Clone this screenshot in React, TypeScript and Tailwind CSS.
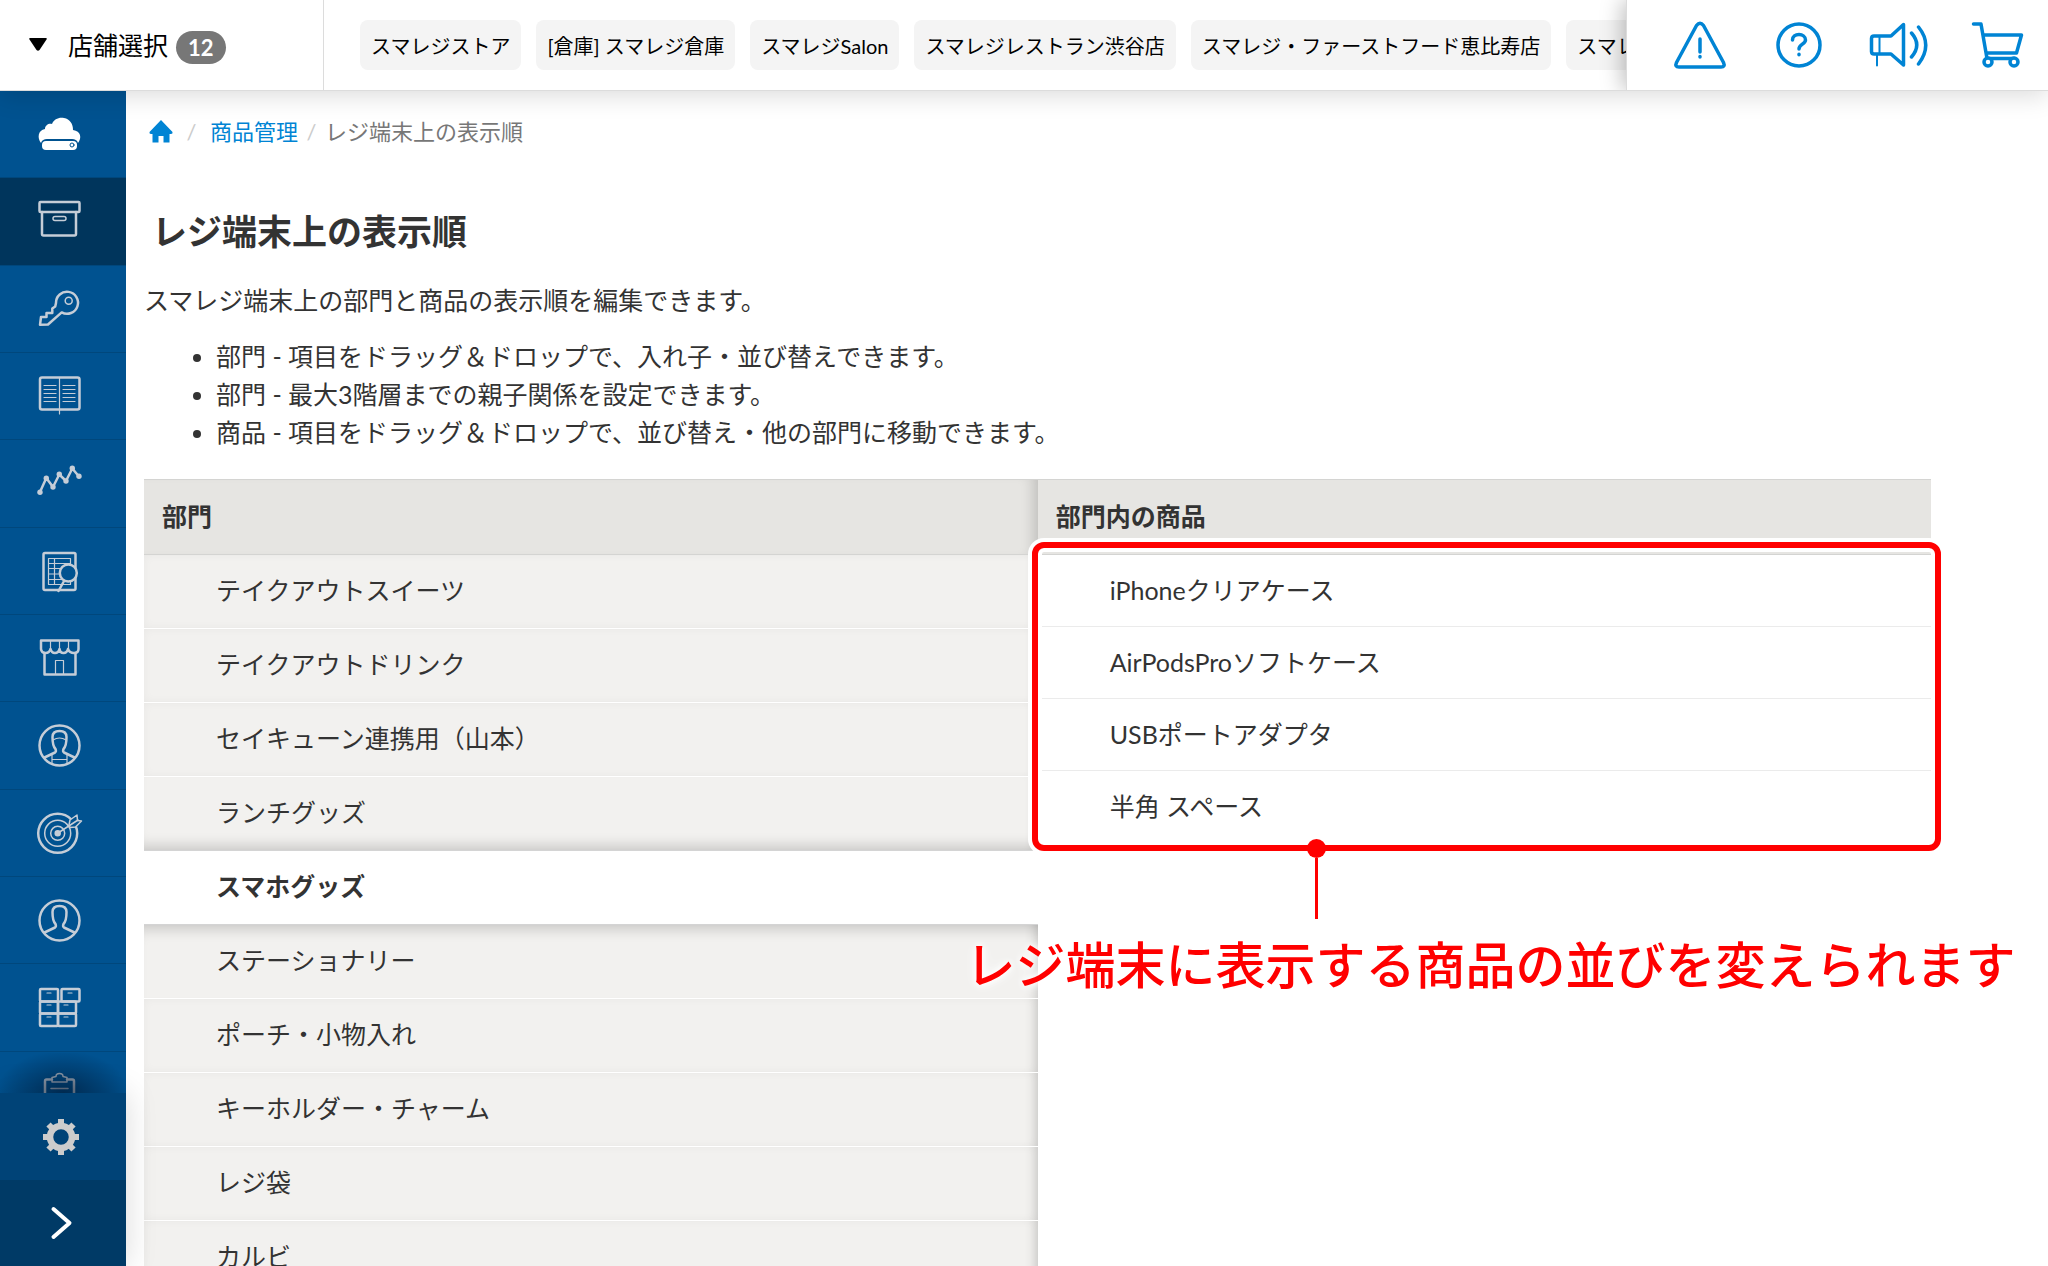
import type { ReactNode } from "react";

const stores = [
  "スマレジストア",
  "[倉庫] スマレジ倉庫",
  "スマレジSalon",
  "スマレジレストラン渋谷店",
  "スマレジ・ファーストフード恵比寿店",
  "スマレジ倉庫店",
];

const notes = [
  "部門 - 項目をドラッグ＆ドロップで、入れ子・並び替えできます。",
  "部門 - 最大3階層までの親子関係を設定できます。",
  "商品 - 項目をドラッグ＆ドロップで、並び替え・他の部門に移動できます。",
];

const categories = [
  "テイクアウトスイーツ",
  "テイクアウトドリンク",
  "セイキューン連携用（山本）",
  "ランチグッズ",
  "スマホグッズ",
  "ステーショナリー",
  "ポーチ・小物入れ",
  "キーホルダー・チャーム",
  "レジ袋",
  "カルビ",
];

const selectedCategory = 4;

const products = ["iPhoneクリアケース", "AirPodsProソフトケース", "USBポートアダプタ", "半角 スペース"];

const menu: { label: string; icon: ReactNode }[] = [
  {
    label: "ホーム",
    icon: (
      <g fill="#fff" stroke="none">
        <path d="M6 33C2 28 3 20 10 19c0-4 4-6 7-5 2-5 7-7 12-6 6 1 9 6 9 12 8 1 9 8 5 13-1-3-3-4-6-4H12c-3 0-5 1-6 4Z" />
        <rect x="7" y="31" width="35" height="9" rx="4" />
        <circle cx="37" cy="35" r="2" stroke="#005290" strokeWidth="1" />
      </g>
    ),
  },
  {
    label: "商品管理",
    icon: (
      <>
        <rect x="4.500" y="5" width="40" height="10" rx="1" />
        <path d="M7 15v22q0 1.500 1.500 1.500h31q1.500 0 1.500-1.500V15" />
        <rect x="18" y="19.500" width="13" height="4" rx="2" strokeWidth="1.500" />
      </>
    ),
  },
  {
    label: "権限",
    icon: (
      <>
        <path d="M21 18a11 11 0 1 1 5.700 9.400L13 39.500l-8 .3L6 32h5.500v-4h5.800v-4.500l2.900-2Z" />
        <circle cx="33.700" cy="15.700" r="3.500" strokeWidth="1.500" />
      </>
    ),
  },
  {
    label: "帳簿",
    icon: (
      <>
        <rect x="5" y="5.500" width="39.500" height="32" rx="2" />
        <path d="M24.500 6v36M9 13.500h12M9 17.500h12M9 21.500h12M9 25.500h12M9 29.500h12M28 13.500h12M28 17.500h12M28 21.500h12M28 25.500h12M28 29.500h12" strokeWidth="1.200" />
      </>
    ),
  },
  {
    label: "売上分析",
    icon: (
      <>
        <path d="m5 33 6.300-14L18 28l6.300-12.500L31 22l6.300-12.500L44 17.500" />
        <g fill="#c5cdd7" stroke="none">
          <circle cx="5" cy="33.300" r="2.700" />
          <circle cx="11.300" cy="19.300" r="2.700" />
          <circle cx="18" cy="28" r="2.700" />
          <circle cx="24.300" cy="15.300" r="2.700" />
          <circle cx="31" cy="22" r="2.700" />
          <circle cx="37.300" cy="9.300" r="2.700" />
          <circle cx="44" cy="17.300" r="2.700" />
        </g>
      </>
    ),
  },
  {
    label: "レポート",
    icon: (
      <>
        <rect x="8.500" y="6" width="32" height="37" rx="1.500" />
        <path d="M13.500 11.500h22v26h-22ZM19.500 11.500v26M13.500 16.500h22M13.500 21.500h22M13.500 27h22M13.500 32.500h22" strokeWidth="1.200" />
        <circle cx="33.300" cy="26" r="8.500" fill="#005290" />
        <path d="m28.500 35-5 9" />
      </>
    ),
  },
  {
    label: "店舗",
    icon: (
      <>
        <path d="M6 6.500h37.500V15q0 4-4.500 4t-6-4q-1 4-4.500 4t-4-4q-1 4-4.500 4t-4.500-4q-1 4-5 4T6 15Z" />
        <path d="M9.500 19v21.500h31V19" />
        <path d="M15.500 7v8M24.500 7v8M33.500 7v8M20.500 40V26.500h8V40" strokeWidth="1.200" />
      </>
    ),
  },
  {
    label: "スタッフ",
    icon: (
      <>
        <circle cx="24.500" cy="24.500" r="20" />
        <path d="M9.500 36.500 20 31.500q1.500-1 .5-3.500c-3-3-3-7-3-12 0-3.500 2-6 7-6s7 2.500 7 6c0 5 0 9-3 12q-1 2.500.5 3.500l10.500 5" />
        <path d="M18 19q6.500-4 13 0M17 33v9M32 33v9M17 38.500h15" strokeWidth="1.200" />
      </>
    ),
  },
  {
    label: "ターゲット",
    icon: (
      <>
        <circle cx="22.700" cy="24.300" r="19.500" />
        <circle cx="22.700" cy="24.300" r="13" strokeWidth="1.500" />
        <circle cx="22.700" cy="24.300" r="7" strokeWidth="1.500" />
        <circle cx="22.700" cy="24.300" r="2" fill="#c5cdd7" />
        <path d="m34 16 1-5 7-5 .5 5.500 4 .5-6 6-5.500.5Z" fill="#005290" strokeWidth="1.500" />
        <path d="m23 24 20-13" strokeWidth="1.500" />
      </>
    ),
  },
  {
    label: "会員",
    icon: (
      <>
        <circle cx="24.500" cy="24.500" r="20" />
        <path d="M9.500 36.500 20 31.500q1.500-1 .5-3.500c-3-3-3-7-3-12 0-3.500 2-6 7-6s7 2.500 7 6c0 5 0 9-3 12q-1 2.500.5 3.500l10.500 5" />
      </>
    ),
  },
  {
    label: "在庫",
    icon: (
      <>
        <rect x="5" y="6" width="18" height="12.500" rx="1" />
        <rect x="26.500" y="6" width="18" height="12.500" rx="1" />
        <rect x="5" y="18.500" width="18" height="12" rx="1" />
        <rect x="23" y="18.500" width="18" height="12" rx="1" />
        <rect x="5" y="30.500" width="18" height="12.500" rx="1" />
        <rect x="23" y="30.500" width="18" height="12.500" rx="1" />
        <path d="M12 10h4M33 10h4M12 22h4M29 22h4M12 34h4M29 34h4" strokeWidth="1.200" />
      </>
    ),
  },
  {
    label: "棚卸",
    icon: (
      <>
        <path d="M17 8.500h-5.500q-1.500 0-1.500 2V46h29V10.500q0-2-1.500-2H32" />
        <path d="M17 11V6.500l4-1q0-3 3.500-3t3.500 3l4 1V11ZM16 17.500h17" strokeWidth="1.500" />
      </>
    ),
  },
];

const tools: { label: string; icon: ReactNode }[] = [
  {
    label: "お知らせ",
    icon: (
      <>
        <path d="M26.500 10.500q3.500-4.500 7 0l20 37q2 4.500-2.500 4.500H9q-4.500 0-2.500-4.500Z" />
        <path d="M30 24v13M30 41.500v.5" />
      </>
    ),
  },
  {
    label: "ヘルプ",
    icon: (
      <>
        <circle cx="30" cy="30" r="21" />
        <path d="M23.500 25c0-3.500 3-5.500 6.500-5.500s6.500 2.200 6.500 5.500c0 4-6.500 4.500-6.500 9M30 39.300v.4" />
      </>
    ),
  },
  {
    label: "新着情報",
    icon: (
      <>
        <path d="M23 21H6q-2.500 0-2.500 2.500v13Q3.500 39 6 39h17l12.500 11V9.500Z" />
        <path d="M11.500 21v18M9 39v11.500" strokeWidth="2" />
        <path d="M43.500 18q10.500 12 0 24M50.500 12q14.500 18 0 37" />
      </>
    ),
  },
  {
    label: "カート",
    icon: (
      <>
        <path d="M6.500 9h7.500L20 43.500h28M16 20h38.500l-5 18H19" />
        <circle cx="21" cy="47" r="4" fill="#fff" />
        <circle cx="47" cy="47" r="4" fill="#fff" />
      </>
    ),
  },
];

function Header() {
  return (
    <header className="relative z-20 flex h-[91px] shrink-0 border-b border-[#dcdcdc] bg-white text-black shadow-[0_4px_24px_rgba(0,0,0,0.15)]">
      <button className="flex w-[324px] shrink-0 items-center border-r border-[#dcdcdc] pl-7 text-[25px] leading-8">
        <svg className="mr-5 h-4 w-5" viewBox="0 0 20 16" aria-hidden="true">
          <path d="M2 1h16q1.500 0 .5 1.500l-7 10.500q-1.500 1.500-3 0L1.500 2.500Q.5 1 2 1Z" />
        </svg>
        店舗選択
        <span className="mt-1 ml-2 rounded-full bg-[#777] px-3 text-[22px] leading-[33px] font-bold text-white">12</span>
      </button>
      <div className="flex min-w-0 flex-1 items-center gap-[15px] overflow-hidden pl-9">
        {stores.map((store) => (
          <button key={store} className="h-[50px] shrink-0 rounded-lg bg-[#f4f4f4] px-[11px] text-[20px] leading-[52px] whitespace-nowrap">
            {store}
          </button>
        ))}
      </div>
      <div className="flex shrink-0 items-center border-l border-[#dcdcdc] bg-white pl-[25px] shadow-[-4px_0_20px_rgba(0,0,0,0.25)] [clip-path:inset(0_0_0_-30px)]">
        {tools.map((tool) => (
          <button key={tool.label} aria-label={tool.label} className="w-[99px]">
            <svg className="ml-[18px] size-[60px]" viewBox="0 0 60 60" fill="none" stroke="#0084d4" strokeWidth="3.500" strokeLinecap="round" strokeLinejoin="round">
              {tool.icon}
            </svg>
          </button>
        ))}
      </div>
    </header>
  );
}

function Sidebar() {
  return (
    <nav className="relative z-10 flex w-[126px] shrink-0 flex-col bg-[#005290]">
      <div className="h-0 flex-1 overflow-hidden">
        <ul className="grid h-[1048px] auto-rows-fr">
          {menu.map((item, index) => (
            <li key={item.label} className={index === 1 ? "border-b border-[#00477c] bg-[#00355c]" : "border-b border-[#00477c]"}>
              <a href="#" aria-label={item.label} className="flex h-full items-center pl-[35px]">
                <svg className="size-12" viewBox="0 0 48 48" fill="none" stroke="#c5cdd7" strokeWidth="2.500" strokeLinecap="round" strokeLinejoin="round">
                  {item.icon}
                </svg>
              </a>
            </li>
          ))}
        </ul>
      </div>
      <div className="relative shadow-[0_0_30px_rgba(0,0,0,0.15)]">
        <div className="absolute inset-x-0 bottom-full h-10 bg-[radial-gradient(ellipse_at_bottom,rgba(0,20,45,0.6),transparent_75%)]" />
        <button aria-label="設定" className="flex h-[87px] w-full items-center justify-center bg-[#004377]">
          <svg className="ml-[-4px] size-10" viewBox="-20 -20 40 40" fill="none" stroke="#ccc">
            <circle r="11" strokeWidth="6.500" />
            <path d="M0-12v-6M0 12v6M-12 0h-6M12 0h6M8.500-8.500l4-4M-8.500 8.500l-4 4M-8.500-8.500l-4-4M8.500 8.500l4 4" strokeWidth="6" />
          </svg>
        </button>
        <button aria-label="メニューを開く" className="flex h-[86px] w-full items-center justify-center bg-[#003a66]">
          <svg className="ml-[-4px] size-10" viewBox="0 0 40 40" fill="none" stroke="#fff" strokeWidth="4" strokeLinecap="round" strokeLinejoin="round">
            <path d="m12.500 6 16 14-16 14" />
          </svg>
        </button>
      </div>
    </nav>
  );
}

function Breadcrumb() {
  return (
    <nav className="flex items-center pl-[5px] text-[22px] leading-8 text-[#777]">
      <a href="#" aria-label="ホーム">
        <svg className="size-6" viewBox="0 0 24 24" fill="#0084d4">
          <path d="m12 0 11.500 12q.5 2-1.500 2h-1.500v8.500h-6V16h-5v6.500h-6V14H2q-2 0-1.500-2Z" />
        </svg>
      </a>
      <span className="w-[37px] text-center text-[#ccc]">/</span>
      <a href="#" className="text-[#0084d4]">
        商品管理
      </a>
      <span className="w-[27px] text-center text-[#ccc]">/</span>
      <span>レジ端末上の表示順</span>
    </nav>
  );
}

function categoryClass(index: number) {
  if (index === selectedCategory) return "border-b border-[#d4d4d4] bg-white font-bold";
  if (index === selectedCategory - 1)
    return "border-b border-[#d4d4d4] bg-[#f2f1ef] shadow-[inset_-12px_0_12px_-10px_rgba(0,0,0,0.18),inset_0_-14px_14px_-10px_rgba(0,0,0,0.18)]";
  if (index === selectedCategory + 1)
    return "border-b border-white bg-[#f2f1ef] shadow-[inset_-12px_0_12px_-10px_rgba(0,0,0,0.18),inset_0_14px_14px_-10px_rgba(0,0,0,0.18)]";
  return "border-b border-white bg-[#f2f1ef] shadow-[inset_-12px_0_12px_-10px_rgba(0,0,0,0.18),inset_0_0_10px_rgba(0,0,0,0.04)]";
}

function Callout() {
  return (
    <div className="pointer-events-none absolute top-[63px] -right-[10px] -left-[6px]">
      <div className="h-[309px] rounded-[12px] border-6 border-[#f00] shadow-[0_0_0_4px_#fff,inset_0_0_0_4px_#fff]" />
      <div className="absolute top-[297px] left-[275px] flex w-[19px] flex-col items-center">
        <span className="size-[19px] rounded-full bg-[#f00]" />
        <span className="h-[61px] w-[3px] bg-[#f00]" />
      </div>
      <p className="absolute top-[387px] -right-[74px] text-[50px] leading-[72px] font-medium whitespace-nowrap text-[#f00] [text-shadow:0_0_6px_#fff,0_0_10px_#fff,0_0_14px_#fff]">
        レジ端末に表示する商品の並びを変えられます
      </p>
    </div>
  );
}

export default function App() {
  return (
    <div className="flex h-screen flex-col overflow-hidden bg-white font-['Lato','Noto_Sans_CJK_JP',sans-serif] text-[25px] leading-[38px] text-[#333]">
      <Header />
      <div className="flex min-h-0 flex-1">
        <Sidebar />
        <main className="min-w-0 flex-1 overflow-hidden pt-[25px]">
          <div className="pl-[18px]">
            <Breadcrumb />
            <h1 className="mt-14 pl-2 text-[35px] leading-[54px] font-bold">レジ端末上の表示順</h1>
            <p className="mt-[23px]">スマレジ端末上の部門と商品の表示順を編集できます。</p>
            <ul className="mt-[18px] list-disc pl-[72px]">
              {notes.map((note) => (
                <li key={note}>{note}</li>
              ))}
            </ul>
          </div>
          <div className="mt-7 ml-[18px] grid w-[93%] grid-cols-2">
            <section>
              <h2 className="h-[76px] border-y border-[#d4d4d2] bg-[#e6e5e2] px-[18px] leading-[72px] font-bold shadow-[inset_-14px_0_14px_-10px_rgba(0,0,0,0.18)]">部門</h2>
              <ul>
                {categories.map((category, index) => (
                  <li key={category} className={categoryClass(index)}>
                    <button className="block h-[73px] w-full pb-1 pl-[72px] text-left">{category}</button>
                  </li>
                ))}
              </ul>
            </section>
            <section className="relative">
              <h2 className="h-[76px] border-y border-[#d4d4d2] bg-[#e6e5e2] px-[18px] leading-[72px] font-bold">部門内の商品</h2>
              <ul>
                {products.map((product) => (
                  <li key={product} className="h-[72px] border-b border-[#ebebeb] pl-[72px] leading-[71px] last:border-b-0">
                    {product}
                  </li>
                ))}
              </ul>
              <Callout />
            </section>
          </div>
        </main>
      </div>
    </div>
  );
}
